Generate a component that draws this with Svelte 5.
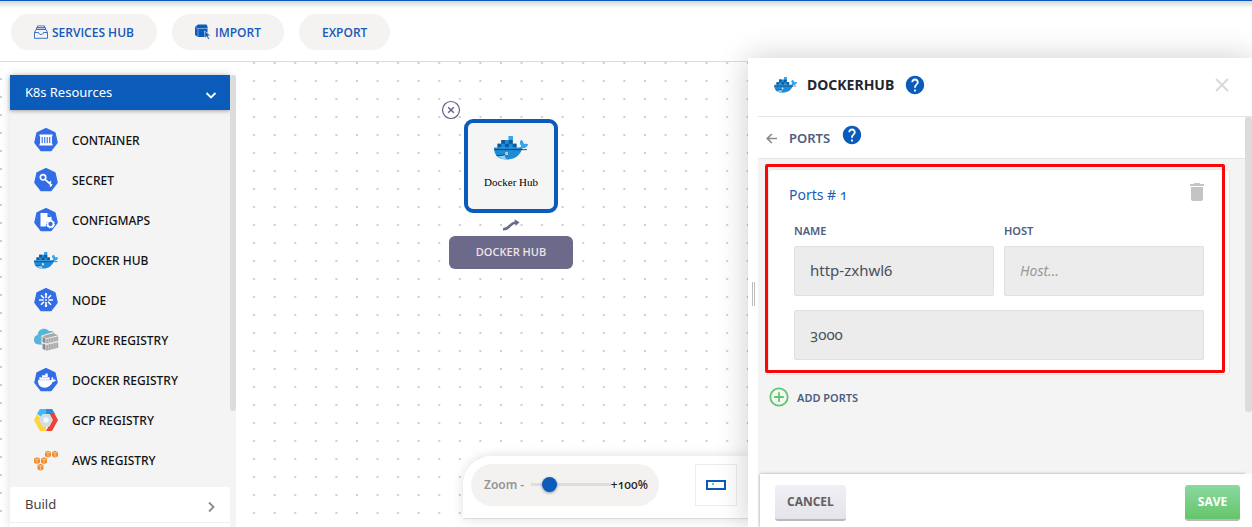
<script>
  const resources = [
    ['container', 'CONTAINER'],
    ['secret', 'SECRET'],
    ['config', 'CONFIGMAPS'],
    ['whale', 'DOCKER HUB'],
    ['node', 'NODE'],
    ['azure', 'AZURE REGISTRY'],
    ['docker', 'DOCKER REGISTRY'],
    ['gcp', 'GCP REGISTRY'],
    ['aws', 'AWS REGISTRY']
  ];
  let zoom = $state(17);
  let name = $state('http-zxhwl6');
  let host = $state('');
  let port = $state('3000');
</script>

{#snippet whale(w, h)}
  <svg width={w} height={h} viewBox="0 0 34 24" aria-hidden="true">
    <path fill="#1f8ad6" d="M3.5 7.7h19v4h-19zM7.3 3.9h11.4v4H7.3zM14.7 0h4v4h-4z" />
    <path fill="#0a5c9e" d="M3.5 7.7h3.7v3.8H3.5zM11 7.7h3.8v3.8H11zM18.7 7.7h3.8v3.8h-3.8zM7.3 3.9H11v3.8H7.3zM14.7 3.9h4v3.8h-4z" />
    <path fill="#35a7f2" d="M14.7 0h4v3.7h-4z" />
    <path fill="#1f8ad6" d="M0 11.5h25.5c1.4-.3 1.8-1 1.6-2-1.4-1.7-1.3-3.7 0-5.5 1.8 1 2.6 2.6 2.4 4.2 1.5-.8 3-.7 4.4 0-.7 2.4-2.3 3.7-5.3 3.9-2.7 7.4-7.3 11.400-16 11.400C4.400 23.500 0 19.500 0 11.500z" />
    <path fill="#35a7f2" d="M27.100 4c1.800 1 2.600 2.600 2.400 4.200 1.500-.8 3-.7 4.400 0-.7 2.400-2.300 3.700-5.300 3.900l-3-.6c1.400-.3 1.700-1 1.500-2-1.400-1.700-1.300-3.700 0-5.500z" />
    <path fill="#8fd3f5" d="M3.500 19.500c3 .7 5 .3 7-.4.300 1.900 1 3.200 2.700 4.400-4.500.1-7.700-1.300-9.700-4z" />
    <path stroke="#17405f" stroke-width=".9" d="M0 13.600h33M2.500 19.300c3.300.6 5.800.2 8-.7" fill="none" />
    <ellipse cx="12.600" cy="17.400" rx="1.300" ry="1.700" fill="#e8f5fc" /><circle cx="12.700" cy="17.400" r=".6" fill="#5d8fae" />
  </svg>
{/snippet}

{#snippet help()}
  <svg width="22" height="22" viewBox="0 0 24 24" fill="#0b5bbb" aria-hidden="true"><path d="M12 2C6.480 2 2 6.480 2 12s4.480 10 10 10 10-4.480 10-10S17.520 2 12 2zm1 17h-2v-2h2v2zm2.070-7.750l-.9.920C13.450 12.900 13 13.500 13 15h-2v-.5c0-1.100.45-2.100 1.170-2.830l1.240-1.260c.37-.36.59-.86.59-1.410 0-1.100-.9-2-2-2s-2 .9-2 2H8c0-2.210 1.790-4 4-4s4 1.790 4 4c0 .88-.36 1.680-.93 2.250z" /></svg>
{/snippet}

{#snippet icon(kind)}
  {#if kind === 'whale'}
    {@render whale(24, 17)}
  {:else}
    <svg width="26" height="26" viewBox="0 0 26 26" aria-hidden="true">
      {#if ['container', 'secret', 'config', 'node', 'docker'].includes(kind)}
        <path d="M13 1.500l9 4.400 2.200 9.800-6.200 7.900H8l-6.200-7.900L4 5.900z" fill="#326de6" stroke="#326de6" stroke-width="1.200" stroke-linejoin="round" />
      {/if}
      {#if kind === 'container'}
        <path d="M6.500 7.500h13v1.700h-.6v7.600h.6v1.700h-13v-1.700h.6V9.200h-.6z" fill="#fff" />
        <path d="M9.200 10v6.200M11.700 10v6.200M14.200 10v6.200M16.700 10v6.200" stroke="#326de6" stroke-width="1.100" />
      {:else if kind === 'secret'}
        <g fill="none" stroke="#fff" stroke-width="1.700"><circle cx="10" cy="10.300" r="2.700" /><path d="M12 12.300l7 6.200M16.300 16.300l1.700-2M18 18.300l-1 1.200" /></g>
      {:else if kind === 'config'}
        <path d="M7.500 6h7l4 4v3.500l-5 1.500-.8 4.500H7.500z" fill="#fff" /><path d="M14.500 6v4h4z" fill="#326de6" />
        <circle cx="17.500" cy="17" r="3" fill="#326de6" stroke="#fff" stroke-width="1.700" /><circle cx="17.500" cy="17" r="4" fill="none" stroke="#fff" stroke-width="1" stroke-dasharray="1.600 1.540" />
      {:else if kind === 'node'}
        <g stroke="#fff" stroke-width="1.600"><path d="M13 6v5M13 15v5M6 13h4.500M15.500 13H20M8 8.300l3 3M18 8.300l-3 3M8 17.700l3-3M18 17.700l-3-3" /></g>
        <path d="M11.500 8h3L13 5.800zM11.500 18h3L13 20.200z" fill="#fff" /><circle cx="13" cy="13" r="1" fill="#fff" />
      {:else if kind === 'docker'}
        <path d="M5 13h13.500c-.3-1.500 0-2.400.7-3 1 .8 1.300 1.600 1.200 2.400 1.200-.1 2 .1 2.700.6-.8 1.300-1.800 1.700-3.300 1.800-1.700 3.700-4.300 5.900-8 5.900-4.500 0-7-2.700-6.800-7.700zM6.300 10.200h10.400V13H6.300zM9 8.300h5.700V11H9zM12.300 6.500h2.400V9h-2.400z" fill="#fff" />
        <path d="M6 12.900h12M8 10.500h7" stroke="#326de6" stroke-width=".3" />
      {:else if kind === 'azure'}
        <path d="M6 17.500C2.500 17.500 1 15.500 1 12.800c0-2.600 1.300-4.200 3.600-4.700C5 4 7.500 1.800 11 1.800c2.500 0 4 .9 5.200 2.400C19.500 3.200 22 5.500 22 8.500L10 18z" fill="#59b4d9" />
        <path d="M8.500 8.500L20 5l1.500 2.500 4.500 1.700V22l-14 3-3.500-2.500z" fill="#f4f4f4" />
        <path d="M9.500 9L20 6.300l5.300 2L13 11.300z" fill="#a8a8a8" /><path d="M9.500 9.700l3 1.800v4.900l-3-1.300zM9.500 16.600l3 1v6l-3-1.800z" fill="#8c8c8c" />
        <path d="M13.200 12l12-2.700v4.500l-12 2.700zM13.200 17.900l12-2.700v5.600l-12 2.900z" fill="#a9a9a9" />
        <path d="M15.500 11.500v11.300M18 11v11.300M20.500 10.500v11.300M23 10v11.300" stroke="#c9c9c9" stroke-width=".8" fill="none" />
      {:else if kind === 'gcp'}
        <path d="M7 2h12l3 5-4 3H8L4 6.500z" fill="#42b7fb" /><path d="M13 2h6l3 5h-9z" fill="#2f8fd0" />
        <path d="M17 6.500h4.500L25 13l-6 11h-6l6-11z" fill="#ed4235" /><path d="M4 7l5 6 4 7v4H7L1 13z" fill="#fdd43b" />
        <path d="M9.500 7h7l3.500 6-3.500 6.500h-7L6 13z" fill="#d3dee4" /><circle cx="13" cy="13" r="2.700" fill="#f4f8fa" />
      {:else if kind === 'aws'}
        {#each [[12, 4], [19, 4], [1, 10.500], [8, 10.500], [4.500, 17]] as [x, y]}
          <path d="M{x} {y + 1}l3-1.200 3 1.200v4.300l-3 1.400-3-1.400z" fill="#f08c2e" />
          <path d="M{x + .5} {y + 1.700}h5M{x + 3} {y + 2}v4.400" stroke="#fde6cf" stroke-width=".6" />
        {/each}
      {/if}
    </svg>
  {/if}
{/snippet}

<div class="page">
  <header class="toolbar">
    <button class="pill">
      <svg width="14" height="14" viewBox="0 0 14 14" fill="none" stroke="#2a63bf" aria-hidden="true"><path d="M2.500 2.500h9V5h-9z" fill="#b9c9e6" stroke="none" /><path d="M.5 7.500h4c.3 1.300 1.200 2 2.500 2s2.200-.7 2.500-2h4v5.800H.5zM.5 7.500l1.500-3h10l1.500 3" stroke-width=".9" /><path d="M2.500 4.500v-2h9v2M3.500 2.500V.9h7v1.600" stroke-width=".8" /></svg>
      SERVICES HUB
    </button>
    <button class="pill">
      <svg width="16" height="16" viewBox="0 0 16 16" aria-hidden="true"><path d="M0 3l3-2.500h8.500l1 2V9L10 8l1 5H3l-3-2z" fill="#0b5bbb" /><path d="M.5 3.500l2.500 1h9.500M3 4.500V13" stroke="#9fbde4" stroke-width=".7" fill="none" /><path d="M9.500 7l6 4.500-2.600.4 1.700 2.700-1.400.8-1.600-2.800-1.600 1.700z" fill="#0b5bbb" stroke="#f4f3f2" stroke-width=".6" /></svg>
      IMPORT
    </button>
    <button class="pill">EXPORT</button>
  </header>

  <main>
    <nav class="sidebar" aria-label="Resources">
      <div class="list">
        <button class="group open">K8s Resources
          <svg width="12" height="12" viewBox="0 0 12 12" fill="none" stroke="#fff" stroke-width="1.800" aria-hidden="true"><path d="M1.500 4L6 8.500 10.500 4" /></svg>
        </button>
        <ul>
          {#each resources as [kind, label]}
            <li><span class="ico">{@render icon(kind)}</span>{label}</li>
          {/each}
        </ul>
        <button class="group">Build
          <svg width="12" height="12" viewBox="0 0 12 12" fill="none" stroke="#8a8a8a" stroke-width="1.800" aria-hidden="true"><path d="M4 1.500L8.500 6 4 10.500" /></svg>
        </button>
        <div class="group"></div>
      </div>
      <div class="track"><div class="thumb"></div></div>
    </nav>

    <section class="canvas" aria-label="Canvas">
      <svg class="dots" width="100%" height="100%" aria-hidden="true">
        <defs><pattern id="grid" x="7.400" y="0" width="20.570" height="18" patternUnits="userSpaceOnUse"><rect x="9.700" y="0" width="2" height="2" fill="#cfcfcf" /></pattern></defs>
        <rect width="100%" height="100%" fill="url(#grid)" />
      </svg>

      <div class="node">
        <button class="remove" aria-label="Remove">
          <svg width="20" height="20" viewBox="0 0 20 20" fill="#fff" stroke="#605f82" aria-hidden="true"><circle cx="10" cy="10" r="8.500" stroke-width="1.200" /><path d="M7.200 7.200l5.600 5.600M12.800 7.200l-5.600 5.600" stroke-width="1.400" /></svg>
        </button>
        <div class="tile">{@render whale(34, 24)}<span>Docker Hub</span></div>
        <svg class="link" width="18" height="12" viewBox="0 0 18 12" aria-hidden="true"><path d="M1 10.200c7.500.4 6-6.700 13.500-6.700" fill="none" stroke="#6b6a8b" stroke-width="2.600" /><path d="M12.500.3l5 3-3.800 3.700z" fill="#6b6a8b" /></svg>
        <button class="tag">DOCKER HUB</button>
      </div>

      <div class="dock">
        <div class="zoom">
          <label for="zoom">Zoom -</label>
          <input id="zoom" type="range" min="0" max="100" bind:value={zoom} />
          <span>+100%</span>
        </div>
        <button class="map" aria-label="Minimap"><svg width="20" height="10" viewBox="0 0 20 10" aria-hidden="true"><path d="M1 1h18v8H1z" fill="#fff" stroke="#0b5bbb" stroke-width="2" /><path d="M6 3h2v2H6z" fill="#5fcabb" /></svg></button>
      </div>
    </section>

    <aside class="drawer">
      <div class="grip"><i></i></div>
      <div class="panel">
        <header class="head">
          {@render whale(23, 16)}
          <h1>DOCKERHUB</h1>
          {@render help()}
          <button class="plain close" aria-label="Close"><svg width="14" height="14" viewBox="0 0 14 14" stroke="#d8d8d8" stroke-width="1.900" aria-hidden="true"><path d="M1 1l12 12M13 1L1 13" /></svg></button>
        </header>
        <div class="body">
          <div class="content">
            <div class="crumb">
              <button class="plain" aria-label="Back"><svg width="12" height="12" viewBox="0 0 12 12" fill="none" stroke="#8b8b8b" stroke-width="1.700" aria-hidden="true"><path d="M11 6.500H1.500M5.800 2L1.300 6.500l4.500 4.500" /></svg></button>
              <h2>PORTS</h2>
              {@render help()}
            </div>
            <form class="card">
              <div class="title"><h3>Ports # 1</h3>
                <button type="button" class="plain" aria-label="Delete port"><svg width="24" height="24" viewBox="0 0 24 24" fill="#c4c4c4" aria-hidden="true"><path d="M6 19c0 1.100.9 2 2 2h8c1.100 0 2-.9 2-2V7H6v12zM19 4h-3.500l-1-1h-5l-1 1H5v2h14V4z" /></svg></button>
              </div>
              <div class="fields">
                <label>NAME<input type="text" bind:value={name} /></label>
                <label>HOST<input type="text" placeholder="Host..." bind:value={host} /></label>
                <input class="wide" type="text" aria-label="Port" bind:value={port} />
              </div>
              <div class="outline"></div>
            </form>
            <button class="plain add"><svg width="20" height="20" viewBox="0 0 20 20" fill="none" stroke="#5fc76b" stroke-width="1.800" aria-hidden="true"><circle cx="10" cy="10" r="8.700" /><path d="M10 5.200v9.600M5.200 10h9.600" /></svg>ADD PORTS</button>
          </div>
          <div class="track"><div class="thumb"></div></div>
        </div>
        <footer><button class="action">CANCEL</button><button class="action save">SAVE</button></footer>
      </div>
    </aside>
  </main>
</div>

<style>
  :global(body) { margin: 0; background: #fff; }
  .page, .page * { box-sizing: border-box; }
  .page {
    height: 100vh; display: flex; flex-direction: column; overflow: hidden;
    font-family: "Noto Sans", "Open Sans", sans-serif; font-size: 12px; font-variant-numeric: oldstyle-nums;
  }
  button, input { font: inherit; font-variant-numeric: inherit; margin: 0; }
  button { cursor: pointer; }
  svg { display: block; flex: none; }
  h1, h2, h3, ul { margin: 0; padding: 0; }
  .toolbar {
    display: flex; gap: 15px; height: 62px; flex: none; padding: 13px 11px 11px;
    border-top: 1px solid #0b5bbb; border-bottom: 1px solid #dcdcdc;
    background: linear-gradient(#d5d5dc, #fff 7px);
  }
  .pill {
    display: flex; align-items: center; gap: 4px; height: 36px; padding: 0 23px;
    border: 0; border-radius: 18px; background: #f4f3f2; color: #1559bb;
    font-family: "Open Sans", sans-serif; font-weight: 600;
  }
  main { flex: 1; min-height: 0; display: grid; grid-template-columns: 236px minmax(0, 1fr) 504px; }
  .sidebar {
    display: flex; min-height: 0; padding: 13px 0 0 10px; overflow: hidden;
    background:
      linear-gradient(#cfcfcf 2px, transparent 2px) 0 16px / 2px 18px repeat-y,
      #fff;
  }
  .list { flex: 1; background: #f4f4f4; box-shadow: 0 0 10px #0002; }
  .track { position: relative; width: 6px; flex: none; background: #f4f4f4; }
  .thumb { height: 336px; background: #dcdcdc; border-radius: 3px; }
  .group {
    display: flex; align-items: center; justify-content: space-between; width: 100%; height: 36px; padding: 0 13px 2px 15px;
    border: 0; border-bottom: 1px solid #eee; background: #fff; color: #3f3f3f; font-size: 13px; text-align: left;
  }
  .group svg { margin-top: 6px; }
  .open { height: 35px; border: 0; background: #0b5bbb; color: #fff; box-shadow: 0 1px 4px #0005; }
  ul { list-style: none; padding: 10px 0 7px 23px; }
  li { display: flex; align-items: center; gap: 13px; height: 40px; color: #111; font-weight: 500; }
  .ico { display: grid; place-items: center; width: 26px; }
  .canvas { position: relative; overflow: hidden; background: #fff; }
  .dots { position: absolute; inset: 0; }
  .node { position: absolute; left: 213px; top: 57px; width: 124px; display: flex; flex-direction: column; align-items: center; }
  .remove { position: absolute; left: -8px; top: -19px; padding: 0; border: 0; background: none; }
  .tile {
    display: flex; flex-direction: column; align-items: center; gap: 14px; width: 94px; height: 94px; padding-top: 13px;
    border: 4px solid #0b5bbb; border-radius: 9px; background: #f5f5f5; color: #000;
    font: 11px/16px "Liberation Serif", serif;
  }
  .link { margin: 6px 0 5px; }
  .tag {
    width: 124px; height: 33px; padding: 0 0 2px; border: 0; border-radius: 6px; background: #6b6a8b; color: #efe3e3;
    font-family: "Open Sans", sans-serif; font-size: 11px; font-weight: 600;
  }
  .dock {
    position: absolute; right: 0; bottom: 8px; display: flex; align-items: center; justify-content: space-between;
    width: 285px; height: 63px; padding: 0 11px 5px 8px; border-bottom: 1px solid #ddd; border-radius: 28px 0 0 0;
    background: #fff; box-shadow: 0 0 12px #0002;
  }
  .zoom {
    display: flex; align-items: center; width: 188px; height: 42px; padding: 0 11px 0 13px;
    border-radius: 21px; background: #f3f2f1; color: #1e1e1e; font-weight: 500;
  }
  .zoom label { flex: 1; color: #949494; font-weight: 600; white-space: nowrap; }
  .zoom input { appearance: none; width: 80px; height: 16px; background: linear-gradient(#ddd, #ddd) center / 100% 3px no-repeat; }
  .zoom input::-webkit-slider-thumb { appearance: none; width: 15px; height: 15px; border-radius: 50%; background: #0b5bbb; box-shadow: 0 1px 3px #0006; }
  .map { display: grid; place-items: center; width: 42px; height: 42px; padding: 0; border: 1px solid #ececec; background: #fff; }
  .drawer { position: relative; z-index: 2; display: flex; min-height: 0; margin-top: -4px; background: #fff; box-shadow: 0 0 30px #0003; }
  .grip { display: flex; align-items: center; width: 10px; padding: 2px 0 0 4px; }
  .grip i { width: 3px; height: 24px; border: solid #bdbdbd; border-width: 0 1px; }
  .panel { flex: 1; min-width: 0; display: flex; flex-direction: column; background: #f4f4f4; }
  .plain { display: flex; align-items: center; padding: 0; border: 0; background: none; }
  .head { display: flex; align-items: center; height: 59px; flex: none; padding: 0 23px 4px 16px; background: #fff; border-bottom: 1px solid #e5e5e5; }
  h1 { margin: 0 10px; color: #24262f; font-size: 14px; line-height: 20px; font-weight: 700; }
  .close { margin-left: auto; }
  .body { flex: 1; min-height: 0; display: flex; overflow: hidden; }
  .body .track { width: 7px; }
  .body .thumb { height: 295px; }
  .content { flex: 1; min-width: 0; }
  .crumb { display: flex; align-items: center; height: 42px; padding: 0 8px; background: #fff; border-bottom: 1px solid #e5e5e5; }
  h2 { margin: 0 11px; color: #4e5d80; font-size: 13px; font-weight: 600; }
  .crumb > :global(svg) { margin-bottom: 5px; }
  .card { position: relative; margin: 10px 15px 0 10px; padding: 9px 25px 14px; background: #fff; border: 1px solid #e5e5e5; border-radius: 5px; }
  .outline { position: absolute; inset: -6px 4px 1px -4px; border: 3px solid #f80808; border-radius: 2px; pointer-events: none; }
  .title { display: flex; justify-content: space-between; margin: 0 -5px; height: 34px; }
  h3 { color: #1d5bb8; font-size: 14px; line-height: 32px; font-weight: 400; }
  .title .plain { height: 26px; }
  .fields { display: grid; grid-template-columns: 1fr 1fr; gap: 14px 10px; padding-top: 10px; }
  .fields label { display: grid; gap: 7px; color: #4e5d80; font-size: 11px; line-height: 16px; font-weight: 600; }
  .fields input {
    width: 100%; height: 50px; padding: 0 15px 2px; border: 1px solid #e0e0e0; border-radius: 2px;
    background: #ececec; color: #495057; font-size: 15px; font-weight: 400;
  }
  .fields input::placeholder { color: #999; font-size: 14px; font-style: italic; }
  .fields .wide { grid-column: 1 / 3; }
  .add { gap: 8px; margin: 12px 11px; color: #4e5d80; font-size: 11px; font-weight: 600; }
  footer { display: flex; justify-content: space-between; height: 53px; flex: none; margin-left: 2px; padding: 11px 12px 0 15px; background: #fff; box-shadow: 0 0 3px #0005; }
  .action {
    height: 36px; padding: 0 12px 2px; border: 0; border-bottom: 2px solid #b9b8bd; border-radius: 3px;
    background: linear-gradient(#f0eff5, #e5e4ea); color: #606060; font-family: "Open Sans", sans-serif; font-weight: 700;
  }
  .save { min-width: 55px; background: linear-gradient(#8bd9a0, #65c569); color: #fff; }
</style>
